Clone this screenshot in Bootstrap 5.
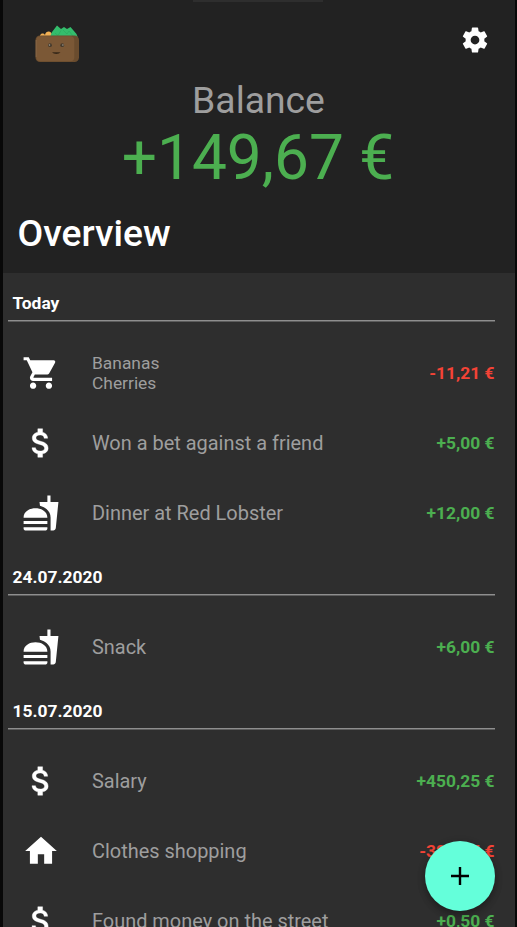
<!DOCTYPE html>
<html lang="en">
<head>
<meta charset="utf-8">
<meta name="viewport" content="width=device-width, initial-scale=1">
<title>Balance</title>
<link rel="stylesheet" href="https://cdn.jsdelivr.net/npm/bootstrap@5.3.0/dist/css/bootstrap.min.css">
<style>
html,body{height:100%}
body{font-family:Roboto,"Liberation Sans",sans-serif;background:#080808;overflow:hidden;color:#fff}
.screen{height:927px;margin-left:3px;margin-right:2px;background:#2e2e2e}
.top-area{height:273.3px;background:#222}
.top-bar{height:79px;padding:25px 25.5px 0 32px}
.notch{width:130px;height:2px;background:#2e2e2e;top:0;left:190px}
.caption{font-size:37.3px;line-height:44px;margin-top:-1px;padding-right:1px;color:#9e9e9e}
.total{font-size:62.2px;line-height:74px;margin-top:-1px;padding-right:2px;color:#4caf50}
.page-title{font-size:37.3px;line-height:44px;font-weight:500;padding-left:14.5px;margin-top:16px}
.entries{padding:0 20.5px 0 4.5px}
.day{height:47.2px;padding:0 0 6.6px 5px;font-size:17.4px;line-height:20px;font-weight:700;border-bottom:1px solid #8e8e8e;box-shadow:0 1px #5c5c5c;margin-bottom:17.6px}
.day.first-day{height:47.7px}
.entry{height:69.6px;font-size:19.95px;line-height:24px;color:#9e9e9e}
.entry svg{width:38px;height:38px;margin-left:14.8px;margin-right:31.7px;fill:#fff}
.two-line{font-size:17.4px;line-height:20px}
.sum{font-size:17.4px;font-weight:700}
.plus{color:#4caf50}.minus{color:#f44336}
.fab{width:70px;height:70px;right:20px;top:841px;background:#64ffda;box-shadow:0 4px 7px rgba(0,0,0,.25),0 2px 10px rgba(0,0,0,.12)}
</style>
<script src="https://cdn.jsdelivr.net/npm/bootstrap@5.3.0/dist/js/bootstrap.bundle.min.js"></script>
</head>
<body>
<svg class="d-none" xmlns="http://www.w3.org/2000/svg">
<symbol id="cart" viewBox="0 0 24 24"><path d="M7 18c-1.100 0-1.990.9-1.990 2S5.900 22 7 22s2-.9 2-2-.9-2-2-2zM1 2v2h2l3.600 7.590-1.350 2.450c-.16.28-.25.61-.25.96 0 1.100.9 2 2 2h12v-2H7.420c-.14 0-.25-.11-.25-.25l.03-.12.9-1.630h7.450c.75 0 1.410-.41 1.750-1.030l3.580-6.490A1.003 1.003 0 0 0 20 4H5.210l-.94-2H1zm16 16c-1.100 0-1.990.9-1.990 2s.89 2 1.990 2 2-.9 2-2-.9-2-2-2z"/></symbol>
<symbol id="dollar" viewBox="0 0 24 24"><path d="M11.800 10.900c-2.270-.59-3-1.200-3-2.150 0-1.090 1.010-1.850 2.700-1.850 1.780 0 2.440.85 2.500 2.100h2.210c-.07-1.720-1.120-3.300-3.210-3.810V3h-3v2.160c-1.940.42-3.500 1.680-3.500 3.610 0 2.310 1.910 3.460 4.700 4.130 2.500.6 3 1.480 3 2.410 0 .69-.49 1.790-2.700 1.790-2.060 0-2.870-.92-2.980-2.100h-2.200c.12 2.190 1.760 3.420 3.680 3.830V21h3v-2.150c1.950-.37 3.500-1.500 3.500-3.550 0-2.840-2.430-3.810-4.700-4.400z" stroke="#fff" stroke-width=".25"/></symbol>
<symbol id="food" viewBox="0 0 24 24"><path d="M18.060 22.990h1.660c.84 0 1.530-.64 1.630-1.460L23 5.050h-5V1h-1.970v4.050h-4.970l.3 2.340c1.710.47 3.310 1.320 4.270 2.260 1.440 1.420 2.430 2.890 2.430 5.290v8.050zM1 21.990V21h15.030v.99c0 .55-.45 1-1.010 1H2.010c-.56 0-1.010-.45-1.010-1zm15.030-7c0-8-15.030-8-15.030 0h15.030zM1.020 17h15v2h-15z"/></symbol>
<symbol id="home" viewBox="0 0 24 24"><path d="M10 20v-6h4v6h5v-8h3L12 3 2 12h3v8z"/></symbol>
</svg>
<main class="screen position-relative overflow-hidden">
<div class="notch position-absolute"></div>
<header class="top-area">
<div class="top-bar d-flex justify-content-between align-items-start">
<svg width="45" height="38" viewBox="0 0 45 38">
<path fill="#f2b155" d="M5 13c-1-4 3-6 5-3 1-5 7-4 7 0v4H5z"/>
<path fill="#34bd6c" d="M15 12l2-5 5-6.500 4 3.500 3-2 3 2 3.500-2 6 7 1.500 4H15z"/>
<path stroke="#2aa65c" stroke-width=".6" fill="none" d="M20 8l3 2.500 3-5M28 5l4 4 2-3 4 5"/>
<rect x=".5" y="10.500" width="43.500" height="26.500" rx="4.500" fill="#6a4c2e"/>
<rect x="1.300" y="11.300" width="38" height="25" rx="4" fill="#7b5836"/>
<path d="M1.200 15v17" stroke="#8a6a4a" stroke-width=".9"/>
<circle cx="15" cy="20.200" r="1.900" fill="#453a2d"/><circle cx="27.200" cy="20.200" r="1.900" fill="#453a2d"/>
<circle cx="14.500" cy="20" r=".75" fill="#a9a294"/><circle cx="27.900" cy="20" r=".75" fill="#a9a294"/>
<path d="M17 27.200h8.500q-1.200 1.700-4.200 1.700t-4.300-1.700z" fill="#352719"/>
</svg>
<svg width="30" height="30" viewBox="0 0 24 24" fill="#fff"><path d="M19.430 12.980c.04-.32.07-.64.07-.98s-.03-.66-.07-.98l2.110-1.650c.19-.15.24-.42.12-.64l-2-3.460c-.12-.22-.39-.3-.61-.22l-2.490 1c-.52-.4-1.080-.73-1.690-.98l-.38-2.650C14.460 2.180 14.250 2 14 2h-4c-.25 0-.46.18-.49.42l-.38 2.650c-.61.25-1.170.59-1.690.98l-2.490-1c-.23-.09-.49 0-.61.22l-2 3.460c-.13.22-.07.49.12.64l2.110 1.650c-.04.32-.07.65-.07.98s.03.66.07.98l-2.110 1.650c-.19.15-.24.42-.12.64l2 3.460c.12.22.39.3.61.22l2.490-1c.52.4 1.080.73 1.690.98l.38 2.650c.03.24.24.42.49.42h4c.25 0 .46-.18.49-.42l.38-2.650c.61-.25 1.170-.59 1.690-.98l2.490 1c.23.09.49 0 .61-.22l2-3.460c.12-.22.07-.49-.12-.64l-2.110-1.650zM12 15.500c-1.930 0-3.500-1.570-3.500-3.500s1.570-3.500 3.500-3.500 3.500 1.570 3.500 3.500-1.570 3.500-3.500 3.500z"/></svg>
</div>
<div class="caption text-center">Balance</div>
<div class="total text-center">+149,67 €</div>
<h1 class="page-title mb-0">Overview</h1>
</header>
<section class="entries">
<div class="day first-day d-flex align-items-end">Today</div>
<div class="entry d-flex align-items-center"><svg><use href="#cart"/></svg><div class="two-line">Bananas<br>Cherries</div><span class="sum minus ms-auto">-11,21 €</span></div>
<div class="entry d-flex align-items-center"><svg><use href="#dollar"/></svg><div>Won a bet against a friend</div><span class="sum plus ms-auto">+5,00 €</span></div>
<div class="entry d-flex align-items-center"><svg><use href="#food"/></svg><div>Dinner at Red Lobster</div><span class="sum plus ms-auto">+12,00 €</span></div>
<div class="day d-flex align-items-end">24.07.2020</div>
<div class="entry d-flex align-items-center"><svg><use href="#food"/></svg><div>Snack</div><span class="sum plus ms-auto">+6,00 €</span></div>
<div class="day d-flex align-items-end">15.07.2020</div>
<div class="entry d-flex align-items-center"><svg><use href="#dollar"/></svg><div>Salary</div><span class="sum plus ms-auto">+450,25 €</span></div>
<div class="entry d-flex align-items-center"><svg><use href="#home"/></svg><div>Clothes shopping</div><span class="sum minus ms-auto">-320,45 €</span></div>
<div class="entry d-flex align-items-center"><svg><use href="#dollar"/></svg><div>Found money on the street</div><span class="sum plus ms-auto">+0,50 €</span></div>
</section>
<button class="fab btn border-0 rounded-circle p-0 position-absolute d-flex align-items-center justify-content-center" aria-label="Add">
<svg width="18" height="18" viewBox="0 0 18 18"><path d="M9 0v18M0 9h18" stroke="#000" stroke-width="2.400"/></svg>
</button>
</main>
</body>
</html>
